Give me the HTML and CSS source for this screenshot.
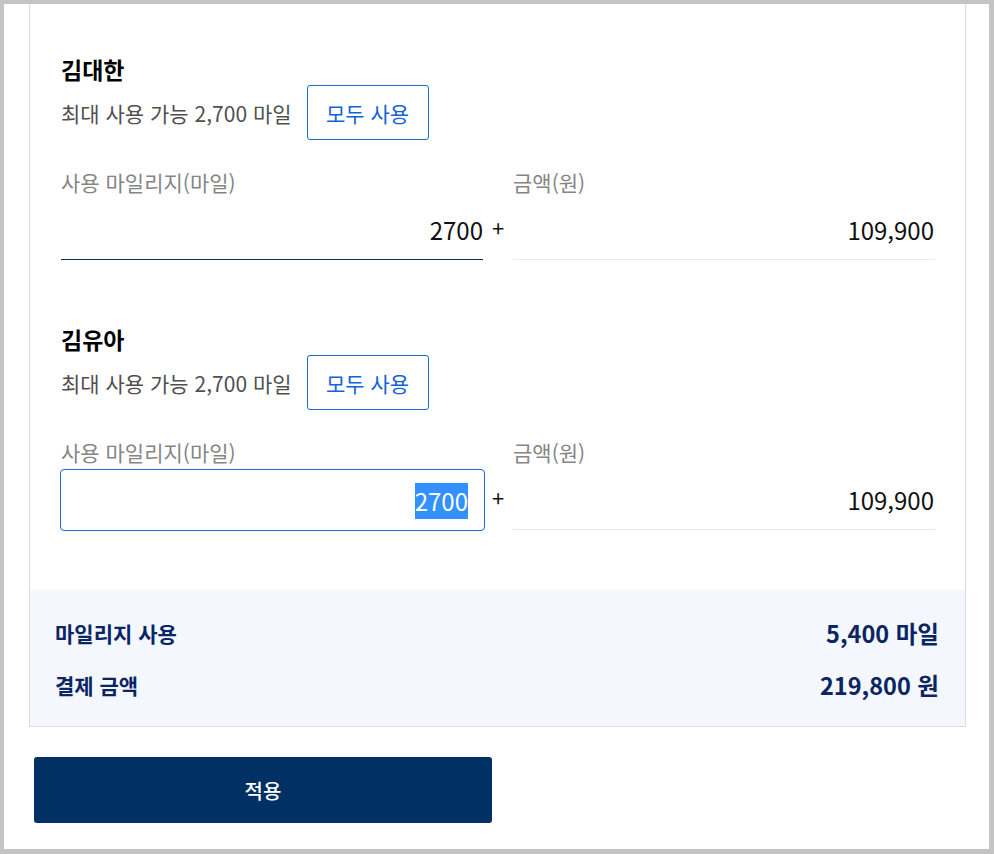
FILE: index.html
```html
<!DOCTYPE html>
<html lang="ko">
<head>
<meta charset="utf-8">
<title>마일리지 사용</title>
<link rel="stylesheet" href="styles.css">
</head>
<body>
<div class="frame">
  <div class="card">
    <div class="travelers">
      <section class="person">
        <h2 class="person-name">김대한</h2>
        <div class="limit-row">
          <span class="limit-text">최대 사용 가능 2,700 마일</span>
          <button class="use-all" type="button">모두 사용</button>
        </div>
        <div class="fields">
          <div class="field">
            <div class="field-label">사용 마일리지(마일)</div>
            <div class="field-box field-box--input"><span class="field-value">2700</span></div>
          </div>
          <div class="plus">+</div>
          <div class="field">
            <div class="field-label">금액(원)</div>
            <div class="field-box field-box--static"><span class="field-value">109,900</span></div>
          </div>
        </div>
      </section>
      <section class="person">
        <h2 class="person-name">김유아</h2>
        <div class="limit-row">
          <span class="limit-text">최대 사용 가능 2,700 마일</span>
          <button class="use-all" type="button">모두 사용</button>
        </div>
        <div class="fields">
          <div class="field">
            <div class="field-label">사용 마일리지(마일)</div>
            <div class="field-box field-box--input field-box--focus"><span class="field-value field-value--selected">2700</span></div>
          </div>
          <div class="plus">+</div>
          <div class="field">
            <div class="field-label">금액(원)</div>
            <div class="field-box field-box--static"><span class="field-value">109,900</span></div>
          </div>
        </div>
      </section>
    </div>
    <div class="summary">
      <div class="summary-row">
        <span class="summary-label">마일리지 사용</span>
        <span class="summary-value">5,400 마일</span>
      </div>
      <div class="summary-row">
        <span class="summary-label">결제 금액</span>
        <span class="summary-value">219,800 원</span>
      </div>
    </div>
  </div>
  <div class="actions">
    <button class="apply" type="button">적용</button>
  </div>
</div>
</body>
</html>
```

FILE: styles.css
```css
* {
  box-sizing: border-box;
}

html, body {
  margin: 0;
  padding: 0;
  background: #ffffff;
}

body {
  font-family: "Noto Sans CJK KR", "Noto Sans", sans-serif;
  color: #111;
}

.frame {
  width: 994px;
  height: 854px;
  border-style: solid;
  border-color: #c4c4c4;
  border-width: 4px 5px 5px 4px;
  background: #fff;
  overflow: hidden;
}

.card {
  margin-left: 25px;
  width: 937px;
  border: 1px solid #dcdcdc;
  border-top: none;
}

.travelers {
  padding: 49px 30px 60px 31px;
  display: flex;
  flex-direction: column;
  gap: 63px;
}

.person-name {
  margin: 0;
  font-size: 23px;
  line-height: 32px;
  font-weight: 700;
  color: #000;
}

.limit-row {
  display: flex;
  align-items: center;
  gap: 15px;
}

.limit-text {
  font-size: 21px;
  line-height: 28px;
  color: #505050;
}

.use-all {
  width: 122px;
  height: 55px;
  padding: 0;
  border: 1px solid #1a6bd6;
  border-radius: 3px;
  background: #fff;
  color: #1463d6;
  font-family: inherit;
  font-size: 21px;
  font-weight: 400;
}

.fields {
  display: grid;
  grid-template-columns: 1fr 30px 1fr;
  margin-top: 28px;
}

.field-label {
  font-size: 21px;
  line-height: 28px;
  color: #858585;
  margin-bottom: 3px;
}

.field-box {
  height: 61px;
  display: flex;
  align-items: center;
  justify-content: flex-end;
  padding-top: 2px;
}

.field-box--input {
  border-bottom: 1px solid #14295a;
}

.field-box--static {
  border-bottom: 1px solid #e8e8e8;
  padding-right: 1px;
}

.field-box--focus {
  height: 62px;
  margin: 0 -2px -1px -1px;
  border: 1px solid #1a6bd6;
  border-radius: 4px;
  padding-right: 16px;
  padding-top: 2px;
}

.field-value {
  font-size: 24px;
  line-height: 36px;
  color: #111;
}

.field-value--selected {
  background: #3390ff;
  color: #fff;
}

.plus {
  align-self: end;
  height: 61px;
  display: flex;
  align-items: center;
  justify-content: center;
  font-size: 22px;
  color: #111;
  padding-bottom: 6px;
}

.summary {
  background: #f4f7fe;
  padding: 28px 26px 26px 25px;
  display: flex;
  flex-direction: column;
  gap: 22px;
  color: #0b2563;
}

.summary-row {
  display: flex;
  justify-content: space-between;
  align-items: center;
  line-height: 30px;
}

.summary-label {
  font-size: 21px;
  font-weight: 700;
}

.summary-value {
  font-size: 23.5px;
  font-weight: 700;
}

.actions {
  padding: 30px 0 0 30px;
}

.apply {
  width: 458px;
  height: 66px;
  border: none;
  border-radius: 3px;
  background: #003064;
  color: #fff;
  font-family: inherit;
  font-size: 20px;
  font-weight: 500;
}
```
